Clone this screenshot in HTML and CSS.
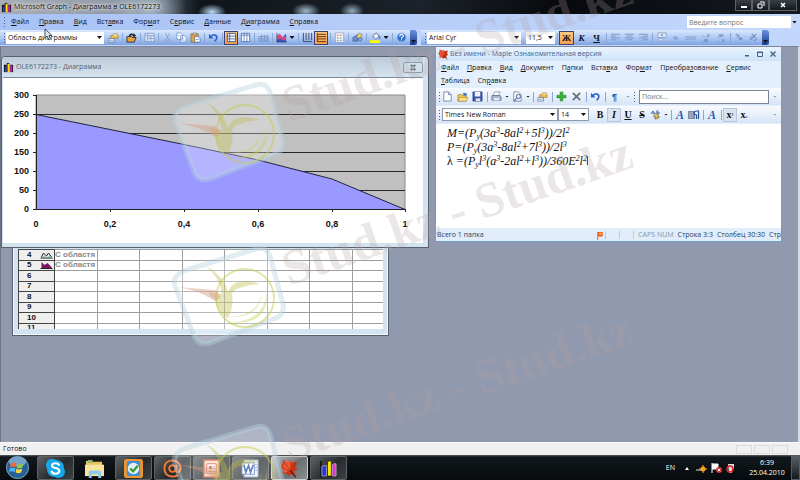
FILE: index.html
```html
<!DOCTYPE html>
<html lang="ru">
<head>
<meta charset="utf-8">
<title>Microsoft Graph - Диаграмма в OLE6172273</title>
<link rel="stylesheet" href="styles.css">
</head>
<body>
<svg class="defs" aria-hidden="true">
  <defs>
    <symbol id="graph" viewBox="0 0 12 12"><path d="M1 3h3v8H1z" fill="#111"/><path d="M2 5h2v6H2z" fill="#2a3df0"/><path d="M4 1h3v10H4z" fill="#222"/><path d="M5 2h2v9H5z" fill="#ffe600"/><path d="M8 3h3v8H8z" fill="#222"/><path d="M8 4h2v7H8z" fill="#e400c8"/></symbol>
    <symbol id="leaf" viewBox="0 0 24 24"><path d="M4 1l5 3 4-2 1 3 7-2-1 7 2 3-4 2 1 5-5-1-3 2-3-3-5 1 1-5-3-4 2-3z" fill="#cf3417"/><path d="M4 1l5 3 4-2 0 12-8 4-2-8 2-3z" fill="#ee5a33"/><path d="M4 2l10 14M20 4l-6 12M3 11l11 5" stroke="#9e210d" stroke-width=".8"/><path d="M13 15l7 8" stroke="#6d1408" stroke-width="1.600"/></symbol>
    <symbol id="props" viewBox="0 0 12 12"><path d="M3 4h8v3H3z" fill="#f3c44b" stroke="#8a6a1c" stroke-width=".6"/><path d="M1 7h6v4H1z" fill="#fff" stroke="#4a5f8f" stroke-width=".7"/><path d="M5 4l1-2h4l1 2" fill="#ffe9a0" stroke="#8a6a1c" stroke-width=".6"/><path d="M2 9h4" stroke="#4a5f8f" stroke-width=".7"/></symbol>
    <symbol id="import" viewBox="0 0 12 12"><path d="M1 5h5l1 1h4l-2 5H1z" fill="#e8a43c" stroke="#222" stroke-width=".9"/><path d="M3 4c1-3 4-3 5-1V1l3 3-3 2V5c-1-2-3-2-4 0z" fill="#222"/></symbol>
    <symbol id="sheet" viewBox="0 0 12 12"><path d="M1 1.500h10v9H1z" fill="#dbe7f8" stroke="#7e93ba" stroke-width=".8"/><path d="M1 4h10M4 1.500v9M4 7h7M7.500 4v6.500" stroke="#7e93ba" stroke-width=".8"/></symbol>
    <symbol id="cut" viewBox="0 0 12 12"><path d="M4 1l3 7M8 1L5 8" stroke="#8ba3cb" stroke-width="1"/><circle cx="4" cy="9.500" r="1.300" fill="none" stroke="#8ba3cb"/><circle cx="8" cy="9.500" r="1.300" fill="none" stroke="#8ba3cb"/></symbol>
    <symbol id="copy" viewBox="0 0 12 12"><path d="M1 1h4l2 2v5H1zM5 4h4l2 2v5H5z" fill="#fff" stroke="#6f8cc4" stroke-width=".8"/><path d="M6 7h3M6 9h4M2 4h2" stroke="#6f8cc4" stroke-width=".6"/></symbol>
    <symbol id="paste" viewBox="0 0 12 12"><path d="M1 2h8v9H1z" fill="#e2a23d" stroke="#876023" stroke-width=".7"/><path d="M3 1h4v2H3z" fill="#c9ccd4" stroke="#666" stroke-width=".5"/><path d="M5 5h4l2 2v4H5z" fill="#fff" stroke="#3d5e9e" stroke-width=".7"/><path d="M6 8h4" stroke="#3d5e9e" stroke-width=".6"/></symbol>
    <symbol id="undo" viewBox="0 0 12 12"><path d="M3 5c4-4 8-1 6 3-.5 1-1 1.500-2 2" fill="none" stroke="#2c63cf" stroke-width="1.700"/><path d="M1 2v5h5z" fill="#2c63cf"/></symbol>
    <symbol id="byrow" viewBox="0 0 12 12"><path d="M1.500 1.500h9v9h-9z" fill="#fff" stroke="#39588e"/><path d="M1 4.500h10M1 7.500h10M4 1v10" stroke="#39588e" stroke-width=".9"/></symbol>
    <symbol id="bycol" viewBox="0 0 12 12"><path d="M1.500 1.500h9v9h-9z" fill="#fff" stroke="#5979b0"/><path d="M4.500 1v10M7.500 1v10M1 3.500h10" stroke="#5979b0" stroke-width=".9"/></symbol>
    <symbol id="dtable" viewBox="0 0 12 12"><path d="M1 5h10v5H1zM1 7.500h10M4 3v7M7 3v7M10 3v7" fill="none" stroke="#7791c2" stroke-width=".9"/></symbol>
    <symbol id="area" viewBox="0 0 12 12"><path d="M1 11V5l3-3 3 4 4-4v9z" fill="#3a56c6"/><path d="M1 9V4l3-2 3 4 4-1v3L8 9 4 7z" fill="#e2477e"/><path d="M1 1v10h11" fill="none" stroke="#333" stroke-width=".7"/></symbol>
    <symbol id="vgrid" viewBox="0 0 12 12"><path d="M1.500 1v9.500H11M4.500 1v8M7.500 1v8M10.500 1v8" fill="none" stroke="#34415f"/></symbol>
    <symbol id="hgrid" viewBox="0 0 12 12"><path d="M1.500 1v9.500H11M2 2.500h9M2 5h9M2 7.500h9" fill="none" stroke="#5a310a"/></symbol>
    <symbol id="legend" viewBox="0 0 12 12"><path d="M1.500 1h9v10h-9z" fill="#fff" stroke="#8795b5" stroke-width=".7"/><path d="M3 3h2v1H3z" fill="#c33"/><path d="M3 6h2v1H3z" fill="#36b"/><path d="M3 8.500h2v1H3z" fill="#393"/><path d="M6 3.500h3M6 6.500h3M6 9h3" stroke="#555" stroke-width=".7"/></symbol>
    <symbol id="draw" viewBox="0 0 12 12"><path d="M1 6l5-3v7H1z" fill="#6b8ed6" stroke="#2f4a88" stroke-width=".6"/><path d="M5 5l3-4 3 2-3 5z" fill="#ead67a" stroke="#6d5c1d" stroke-width=".6"/><circle cx="9" cy="8" r="2" fill="#8ea6cf" stroke="#2f4a88" stroke-width=".6"/></symbol>
    <symbol id="fill" viewBox="0 0 12 12"><path d="M3 4l4-3 3 4-4 3z" fill="#eef3fb" stroke="#45597f" stroke-width=".8"/><path d="M9 4c2 0 2 2 1.500 4" fill="none" stroke="#2d61c2"/><path d="M0 9h11v3H0z" fill="#ff0"/></symbol>
    <symbol id="help" viewBox="0 0 12 12"><circle cx="6" cy="6" r="5" fill="#2f6fd0" stroke="#a5c4f0"/><path d="M4 5c0-3 4-3 4-1 0 1.500-2 1.500-2 3M6 8v1.300" fill="none" stroke="#fff" stroke-width="1.200"/></symbol>
    <symbol id="al" viewBox="0 0 12 12"><path d="M1 2.500h10M1 4.500h6M1 6.500h10M1 8.500h6" stroke="#7b96c8"/></symbol>
    <symbol id="ac" viewBox="0 0 12 12"><path d="M1 2.500h10M3 4.500h6M1 6.500h10M3 8.500h6" stroke="#7b96c8"/></symbol>
    <symbol id="ar" viewBox="0 0 12 12"><path d="M1 2.500h10M5 4.500h6M1 6.500h10M5 8.500h6" stroke="#7b96c8"/></symbol>
    <symbol id="money" viewBox="0 0 12 12"><path d="M2 1h9v5H2z" fill="#dde7f7" stroke="#8195bb" stroke-width=".8"/><ellipse cx="5" cy="8.500" rx="3" ry="1.500" fill="#cfdcf2" stroke="#8195bb" stroke-width=".7"/><circle cx="6.500" cy="3.500" r="1.200" fill="#8ba1ca"/></symbol>
    <symbol id="tiltd" viewBox="0 0 12 12"><path d="M2 2l7 7M3 6l3-3M6 9l3-3M5 7l2 2" stroke="#7b93c2" stroke-width="1.300"/></symbol>
    <symbol id="tiltu" viewBox="0 0 12 12"><path d="M2 9l7-7M4 2l4 4M2 5l3 3M6 10l4-3" stroke="#7b93c2" stroke-width="1.300"/></symbol>
    <symbol id="new" viewBox="0 0 12 12"><path d="M2 1h5l3 3v7H2z" fill="#fff" stroke="#566a94" stroke-width=".8"/><path d="M7 1v3h3" fill="none" stroke="#566a94" stroke-width=".8"/></symbol>
    <symbol id="open" viewBox="0 0 12 12"><path d="M1 4h4l1 1h4v6H1z" fill="#f5c94a" stroke="#9b7424" stroke-width=".7"/><path d="M3 7h9l-2 4H1z" fill="#ffe48c" stroke="#9b7424" stroke-width=".6"/><path d="M6 3c2-2 3-1 4 0V1l1 4H8" fill="#3c77c9"/></symbol>
    <symbol id="save" viewBox="0 0 12 12"><path d="M1 1h10v10H1z" fill="#3857a8" stroke="#243a7c" stroke-width=".7"/><path d="M3 1h6v5H3z" fill="#edf2fc"/><path d="M4 8h5v3H4z" fill="#dce4f2"/></symbol>
    <symbol id="print" viewBox="0 0 12 12"><path d="M4 1h6L8 5H2z" fill="#fff" stroke="#69799b" stroke-width=".7"/><path d="M1 5h9l1 2v3H1z" fill="#aebbd2" stroke="#53658c" stroke-width=".8"/><path d="M3 8h6v2H3z" fill="#f5f7fb"/></symbol>
    <symbol id="view" viewBox="0 0 12 12"><path d="M2 1h5l3 3v7H2z" fill="#fff" stroke="#566a94" stroke-width=".8"/><circle cx="7" cy="6" r="2.400" fill="#d5e5f8" stroke="#45638f"/><path d="M5 8l-3 3" stroke="#45638f" stroke-width="1.200"/></symbol>
    <symbol id="plus" viewBox="0 0 12 12"><path d="M4.500 1h3v3.500H11v3H7.500V11h-3V7.500H1v-3h3.500z" fill="#35b235" stroke="#1f8423" stroke-width=".5"/></symbol>
    <symbol id="del" viewBox="0 0 12 12"><path d="M2 2l8 8M10 2l-8 8" stroke="#6b7280" stroke-width="2"/></symbol>
    <symbol id="abc" viewBox="0 0 12 12"><path d="M3 4l5-1 2 6-5 2z" fill="#d9b85a"/><path d="M1 5l2-3 2 3M2 4h2M7 1v4h2V3H7M3 7c2 0 3 1 2 3M9 7l-2 3" fill="none" stroke="#4571bd" stroke-width="1"/></symbol>
    <symbol id="para" viewBox="0 0 12 12"><path d="M0 2h7v8H0z" fill="#7b889f"/><path d="M1 4h4M1 6h4M1 8h4" stroke="#d9e0ec" stroke-width=".7"/><path d="M11 2H8.500c-3 0-3 4 0 4v4M10.500 2v8" fill="none" stroke="#254f9f" stroke-width="1.200"/></symbol>
    <symbol id="mark" viewBox="0 0 120 108">
      <path d="M18 26L88 5q10-3 14 7l13 48q2 10-7 14L42 99q-12 3-16-7L7 42q-3-11 11-16z" fill="#fff" fill-opacity=".28" stroke="#b4d2de" stroke-opacity=".4" stroke-width="5"/>
      <circle cx="77" cy="54" r="29" fill="none" stroke="#c4cc48" stroke-opacity=".5" stroke-width="1.800"/>
      <path d="M61 78q36 0 38-31q2 36-38 31zM57 73q34 1 37-26q-1 29-37 26z" fill="#c4cc48" fill-opacity=".4"/>
      <path d="M38 22q18 10 22 26q6-17 32-8q-8 0-20 4q-6 1-8 6q2 14-4 24q-11-4-13-19q-6-3-6-7q6 1 13 2q-2-16-16-28z" fill="#bdbb48" fill-opacity=".38"/>
      <path d="M9 43l38 3q5 3 5 8l-5 3Q28 45 9 43z" fill="#d79a86" fill-opacity=".45"/>
    </symbol>
  </defs>
</svg>

<header class="titlebar">
  <svg class="i10"><use href="#graph"/></svg>
  <h1>Microsoft Graph - Диаграмма в OLE6172273</h1>
  <div class="winbtns">
    <button aria-label="Свернуть"><svg viewBox="0 0 10 8"><path d="M2 5h6v2H2z" fill="#fff"/></svg></button>
    <button aria-label="Восстановить"><svg viewBox="0 0 10 8"><path d="M4 1h4v4M2 3h4v4H2z" fill="none" stroke="#fff"/></svg></button>
    <button class="wide" aria-label="Закрыть"><svg viewBox="0 0 10 8"><path d="M3 2l4 4M7 2L3 6" stroke="#fff" stroke-width="1.500"/></svg></button>
  </div>
</header>

<nav class="menubar">
  <i class="grip"></i>
  <button><u>Ф</u>айл</button><button><u>П</u>равка</button><button><u>В</u>ид</button><button>Вст<u>а</u>вка</button><button>Фор<u>м</u>ат</button><button>С<u>е</u>рвис</button><button><u>Д</u>анные</button><button>Д<u>и</u>аграмма</button><button><u>С</u>правка</button>
  <div class="ask"><input type="text" placeholder="Введите вопрос" aria-label="Введите вопрос"><button aria-label="Список вопросов"><b class="tri"></b></button></div>
</nav>

<div class="toolbars">
  <div class="bar">
    <i class="grip"></i>
    <div class="combo area-combo"><select aria-label="Объект диаграммы"><option>Область диаграммы</option></select><b class="tri"></b></div>
    <i class="gap"></i>
    <button class="tb" aria-label="Свойства"><svg><use href="#props"/></svg></button><i class="sep"></i>
    <button class="tb" aria-label="Импорт"><svg><use href="#import"/></svg></button><i class="sep"></i>
    <button class="tb" aria-label="Режим таблицы"><svg><use href="#sheet"/></svg></button><i class="sep"></i>
    <button class="tb" aria-label="Вырезать"><svg><use href="#cut"/></svg></button>
    <button class="tb" aria-label="Копировать"><svg><use href="#copy"/></svg></button>
    <button class="tb" aria-label="Вставить"><svg><use href="#paste"/></svg></button><i class="sep"></i>
    <button class="tb" aria-label="Отменить"><svg><use href="#undo"/></svg></button><i class="sep"></i>
    <button class="tb on" aria-label="По строкам"><svg><use href="#byrow"/></svg></button>
    <button class="tb" aria-label="По столбцам"><svg><use href="#bycol"/></svg></button><i class="sep"></i>
    <button class="tb" aria-label="Таблица данных"><svg><use href="#dtable"/></svg></button><i class="sep"></i>
    <button class="tb" aria-label="Тип диаграммы"><svg><use href="#area"/></svg></button><button class="drop" aria-label="Другие типы"><b class="tri"></b></button><i class="sep"></i>
    <button class="tb" aria-label="Вертикальная сетка"><svg><use href="#vgrid"/></svg></button>
    <button class="tb on" aria-label="Горизонтальная сетка"><svg><use href="#hgrid"/></svg></button><i class="sep"></i>
    <button class="tb" aria-label="Легенда"><svg><use href="#legend"/></svg></button><i class="sep"></i>
    <button class="tb" aria-label="Рисование"><svg><use href="#draw"/></svg></button><i class="sep"></i>
    <button class="tb" aria-label="Цвет заливки"><svg><use href="#fill"/></svg></button><button class="drop" aria-label="Другие цвета"><b class="tri"></b></button><i class="sep"></i>
    <button class="tb" aria-label="Справка"><svg><use href="#help"/></svg></button>
    <button class="more" aria-label="Параметры панели"><b class="tri"></b></button>
  </div>
  <div class="bar">
    <i class="grip"></i>
    <div class="combo font-combo"><select aria-label="Шрифт"><option>Arial Cyr</option></select><b class="tri"></b></div>
    <i class="gap"></i><i class="gap"></i>
    <div class="combo size-combo"><select aria-label="Размер"><option>11,5</option></select><b class="tri"></b></div>
    <i class="sep"></i>
    <button class="tb on ltr">Ж</button><button class="tb ltr it">К</button><button class="tb ltr un">Ч</button><i class="sep"></i>
    <button class="tb" aria-label="По левому краю"><svg><use href="#al"/></svg></button><button class="tb" aria-label="По центру"><svg><use href="#ac"/></svg></button><button class="tb" aria-label="По правому краю"><svg><use href="#ar"/></svg></button><i class="sep"></i>
    <button class="tb" aria-label="Денежный формат"><svg><use href="#money"/></svg></button><button class="tb num">%</button><button class="tb num">000</button><button class="tb num two">←,0<br>,00</button><button class="tb num two">,00<br>→,0</button><i class="sep"></i>
    <button class="tb" aria-label="Текст снизу"><svg><use href="#tiltd"/></svg></button><button class="tb" aria-label="Текст сверху"><svg><use href="#tiltu"/></svg></button>
    <button class="more" aria-label="Параметры панели"><b class="tri"></b></button>
  </div>
</div>

<main class="workspace">
  <section class="window datasheet" aria-label="Таблица">
    <div class="sheet">
      <table>
        <colgroup><col class="rowhead"><col><col><col><col><col><col><col><col></colgroup>
        <tbody>
        <tr><th>4 <svg viewBox="0 0 12 8"><path d="M0 7h12M1 6l2-4 3 3 2-3 3 4" fill="none" stroke="#222"/><path d="M2 6l2-2 3 2 2-2 2 2z" fill="#8fd5d5"/></svg></th><td>С областя</td><td></td><td></td><td></td><td></td><td></td><td></td><td></td></tr>
        <tr><th>5 <svg viewBox="0 0 12 8"><path d="M1 7V1l3 3 3-2 4 4v1z" fill="#7b1263"/><path d="M0 7.500h12" stroke="#222"/></svg></th><td>С областя</td><td></td><td></td><td></td><td></td><td></td><td></td><td></td></tr>
        <tr><th>6</th><td></td><td></td><td></td><td></td><td></td><td></td><td></td><td></td></tr>
        <tr><th>7</th><td></td><td></td><td></td><td></td><td></td><td></td><td></td><td></td></tr>
        <tr><th>8</th><td></td><td></td><td></td><td></td><td></td><td></td><td></td><td></td></tr>
        <tr><th>9</th><td></td><td></td><td></td><td></td><td></td><td></td><td></td><td></td></tr>
        <tr><th>10</th><td></td><td></td><td></td><td></td><td></td><td></td><td></td><td></td></tr>
        <tr><th>11</th><td></td><td></td><td></td><td></td><td></td><td></td><td></td><td></td></tr>
        </tbody>
      </table>
    </div>
  </section>

  <section class="window chartwin">
    <header><svg class="i10"><use href="#graph"/></svg><h2>OLE6172273 - Диаграмма</h2><button aria-label="Закрыть"><svg viewBox="0 0 10 8"><path d="M2.500 1l5 6M7.500 1l-5 6" stroke="#59656f" stroke-width="2.400"/><path d="M3 2l4 4M7 2L3 6" stroke="#fff" stroke-width=".8"/></svg></button></header>
    <div class="chart">
      <svg viewBox="0 0 420 165" role="img" aria-label="Диаграмма с областями">
        <path d="M33 17h369v114H33z" fill="#c0c0c0" stroke="#8a8a8a"/>
        <path d="M33 36.500h369M33 55.500h369M33 74.500h369M33 93.500h369M33 112.500h369" stroke="#2a2630"/>
        <path d="M33 36.500L107 51.500 181 66.500 255 82 329 101 402 131.500H33z" fill="#9999ff"/>
        <path d="M33 36.500L107 51.500 181 66.500 255 82 329 101 402 131.500" fill="none" stroke="#22223c"/>
        <path d="M33.500 17v115M30 17.500h4M30 36.500h4M30 55.500h4M30 74.500h4M30 93.500h4M30 112.500h4M30 131.500h372.500M107.500 131v3M181.500 131v3M255.500 131v3M329.500 131v3M402.500 131v3" fill="none" stroke="#222"/>
        <g class="ylab"><text x="26" y="20">300</text><text x="26" y="39">250</text><text x="26" y="58">200</text><text x="26" y="77">150</text><text x="26" y="96">100</text><text x="26" y="115">50</text><text x="26" y="134">0</text></g>
        <g class="xlab"><text x="33" y="149">0</text><text x="107" y="149">0,2</text><text x="181" y="149">0,4</text><text x="255" y="149">0,6</text><text x="329" y="149">0,8</text><text x="402" y="149">1</text></g>
      </svg>
    </div>
  </section>

  <section class="maple">
    <header><svg class="i10"><use href="#leaf"/></svg><h2>Без имени - Maple Ознакомительная версия</h2>
      <button aria-label="Свернуть"><svg viewBox="0 0 10 8"><path d="M3 5h4v1.500H3z" fill="#44618e"/></svg></button><button aria-label="Развернуть"><svg viewBox="0 0 10 8"><path d="M2.500 2h5v4.500h-5zM2 2.500h6" fill="none" stroke="#44618e"/></svg></button><button aria-label="Закрыть"><svg viewBox="0 0 10 8"><path d="M2.500 1.500l5 5M7.500 1.500l-5 5" stroke="#44618e" stroke-width="1.400"/></svg></button>
    </header>
    <nav><button><u>Ф</u>айл</button><button><u>П</u>равка</button><button><u>В</u>ид</button><button><u>Д</u>окумент</button><button>П<u>а</u>пки</button><button>Вста<u>в</u>ка</button><button>Фор<u>м</u>ат</button><button>Преобра<u>з</u>ование</button><button><u>С</u>ервис</button><button><u>Т</u>аблица</button><button>Сп<u>р</u>авка</button></nav>
    <div class="mbar">
      <i class="grip"></i>
      <button class="mb" aria-label="Создать"><svg><use href="#new"/></svg></button><button class="mb" aria-label="Открыть"><svg><use href="#open"/></svg></button><button class="mb" aria-label="Сохранить"><svg><use href="#save"/></svg></button><i class="sep"></i>
      <button class="mb" aria-label="Печать"><svg><use href="#print"/></svg></button><button class="mdrop" aria-label="Параметры печати"><b class="tri"></b></button>
      <button class="mb" aria-label="Просмотр"><svg><use href="#view"/></svg></button><button class="mdrop" aria-label="Параметры просмотра"><b class="tri"></b></button><i class="sep"></i>
      <button class="mb" aria-label="Свойства"><svg><use href="#props"/></svg></button><i class="sep"></i>
      <button class="mb" aria-label="Добавить"><svg><use href="#plus"/></svg></button><button class="mb" aria-label="Удалить"><svg><use href="#del"/></svg></button><i class="sep"></i>
      <button class="mb" aria-label="Отменить"><svg><use href="#undo"/></svg></button><i class="sep"></i>
      <button class="mb pil">¶</button>
      <button class="mdrop dim" aria-label="Ещё"><b class="tri"></b></button><i class="grip"></i>
      <input type="search" placeholder="Поиск..." aria-label="Поиск">
      <button class="mdrop dim" aria-label="Ещё"><b class="tri"></b></button>
    </div>
    <div class="mbar">
      <i class="grip"></i>
      <div class="combo mfont"><select aria-label="Шрифт"><option>Times New Roman</option></select><b class="tri"></b></div><div class="combo msize"><select aria-label="Размер"><option>14</option></select><b class="tri"></b></div>
      <i class="gap"></i><i class="gap"></i>
      <button class="fb">B</button><button class="fb it lit">I</button><button class="fb un">U</button><button class="fb st">S</button>
      <button class="fb" aria-label="Орфография"><svg><use href="#abc"/></svg></button><button class="mdrop" aria-label="Язык"><b class="tri"></b></button><i class="sep"></i>
      <button class="fb blue it">A</button><button class="fb" aria-label="Стиль абзаца"><svg><use href="#para"/></svg></button><i class="sep"></i>
      <button class="fb blue it">A</button><i class="sep"></i>
      <button class="fb lit">x<sup>²</sup></button><button class="fb">x<sub>₂</sub></button>
      <button class="mdrop dim end" aria-label="Ещё"><b class="tri"></b></button>
    </div>
    <article>
      <p>M=(P<sub>y</sub>(3a<sup>3</sup>-8al<sup>2</sup>+5l<sup>3</sup>))/2l<sup>2</sup></p>
      <p>P=(P<sub>y</sub>(3a<sup>3</sup>-8al<sup>2</sup>+7l<sup>3</sup>))/2l<sup>3</sup></p>
      <p><span class="up">λ</span> =(P<sub>y</sub>l<sup>3</sup>(a<sup>3</sup>-2al<sup>2</sup>+l<sup>3</sup>))/360E<sup>2</sup>l<sup>2</sup><i class="caret"></i></p>
    </article>
    <footer><span class="total">Всего 1 папка</span><span class="flag"><svg viewBox="0 0 8 10"><path d="M1 1h6v5H2v4H1z" fill="#ee5c17"/><path d="M3 2h3v2H3z" fill="#ffb06b"/></svg></span><span class="cell"></span><span class="cell"></span><span class="caps">CAPS NUM</span><span>Строка 3:3</span><span>Столбец 30:30</span><span>Стр</span></footer>
  </section>
</main>

<footer class="status"><span>Готово</span><i></i><i></i><i></i></footer>

<footer class="taskbar">
  <button class="orb" aria-label="Пуск"><svg viewBox="0 0 26 24"><circle cx="13" cy="12" r="11.500" fill="#236299" stroke="#83aac6"/><ellipse cx="13" cy="6" rx="9" ry="5" fill="#a8cde5" opacity=".6"/><path d="M6 8q3-2 6 0l-1 4q-3-2-6 0z" fill="#f06b30"/><path d="M13 8q3 2 6 0l-1 4q-3 2-6 0z" fill="#93cb45"/><path d="M5 13q3-2 6 0l-1 4q-3-2-6 0z" fill="#4cb3f2"/><path d="M12 13q3 2 6 0l-1 4q-3 2-6 0z" fill="#ffd33e"/></svg></button>
  <button class="task" aria-label="Skype"><svg viewBox="0 0 20 20"><path d="M6 0q3 0 5 1 8 1 8 9 1 2 1 4-1 6-7 6-2 0-3-1Q1 19 1 10 0 8 0 6q1-6 6-6z" fill="#18a8ea"/><path d="M14 7q-1-3-5-2.500Q6 5 6.500 7.500 7 9 10 9.500q4 .7 4 3-.3 3-4 3t-4.500-3" fill="none" stroke="#fff" stroke-width="2.200"/></svg></button>
  <button class="task plain" aria-label="Проводник"><svg viewBox="0 0 20 20"><path d="M1 2h6l1 1h10v14H1z" fill="#e5c566"/><path d="M3 1h5v3H3z" fill="#8fb96a"/><path d="M0 6h20v12H0z" fill="#f7e59d"/><path d="M4 20v-6q0-2 2-2h9q2 0 2 2v6h-3v-4H7v4z" fill="#8ecaee"/></svg></button>
  <button class="task" aria-label="Почта"><svg viewBox="0 0 20 20"><rect width="20" height="20" rx="3" fill="#ee9431"/><rect x="3" y="2" width="14" height="16" rx="2" fill="#3f8fd4"/><circle cx="10" cy="10" r="6" fill="#e4eef6"/><path d="M6.500 10l3 3 5-6" fill="none" stroke="#3a9d2c" stroke-width="2.400"/></svg></button>
  <button class="task" aria-label="Агент"><svg viewBox="0 0 20 20"><circle cx="10" cy="10" r="3.500" fill="none" stroke="#f47a32" stroke-width="2"/><path d="M14 6v6q0 2 2 2 3-1 2.500-5Q17 1.500 10 1.500 1.500 2 1.500 10T10 18.500q3 0 6-1.500" fill="none" stroke="#f47a32" stroke-width="2"/></svg></button>
  <button class="task" aria-label="PowerPoint"><svg viewBox="0 0 20 20"><path d="M2 1h16v18H2z" fill="#f6dccb" stroke="#cc5933" stroke-width="1.500"/><path d="M5 5h10v10H5z" fill="#fff" stroke="#cf5a36"/><circle cx="9" cy="9" r="2" fill="#cf5a36"/><path d="M12 8h2M12 10h2M6 13h8" stroke="#cf5a36"/></svg></button>
  <button class="task" aria-label="Word"><svg viewBox="0 0 20 20"><path d="M3 1h15v18H3z" fill="#e9f0fa" stroke="#7893c4"/><path d="M1 4h13v12H1z" fill="#fff" stroke="#4c70b5"/><path d="M3 6l2 8 3-7 2 7 3-8" fill="none" stroke="#2d57a7" stroke-width="1.800"/><path d="M15 6h2M15 9h2M15 12h2" stroke="#7893c4"/></svg></button>
  <button class="task lit" aria-label="Maple"><svg><use href="#leaf"/></svg></button>
  <button class="task" aria-label="Microsoft Graph"><svg viewBox="0 0 20 20"><path d="M2 2v16h17" fill="none" stroke="#111" stroke-width="1.500"/><path d="M3 8l2-1h3v11H3z" fill="#2939c9" stroke="#dde" stroke-width=".6"/><path d="M9 3l2-1h2v16H9z" fill="#ffe900" stroke="#222" stroke-width=".8"/><path d="M14 6l2-1h2v13h-4z" fill="#db38cb" stroke="#dde" stroke-width=".6"/></svg></button>
  <div class="tray"><span class="lang">EN</span><svg viewBox="0 0 52 12"><path d="M0 8l2-3 2 3z" fill="#fff"/><path d="M11 8h9" stroke="#999" stroke-width="1.500"/><circle cx="18" cy="7" r="2.500" fill="#f8a71c"/><path d="M18 3v8M14 7h8" stroke="#f8a71c"/><path d="M27 2h6v5h-6M27 1v10" fill="#fff" stroke="#fff"/><circle cx="34" cy="8" r="3" fill="#dc2828"/><path d="M32.700 6.700l2.600 2.600M35.300 6.700l-2.600 2.600" stroke="#fff"/><path d="M43 2h6v5h-2v4h-3z" fill="#ddd"/><circle cx="45" cy="7" r="3" fill="none" stroke="#d22" stroke-width="1.500"/></svg><time>6:39<br>25.04.2010</time></div>
  <button class="peek" aria-label="Свернуть все окна"></button>
</footer>

<svg class="pointer" viewBox="0 0 9 13" aria-hidden="true"><path d="M1 1v9l2-2 2 4 1.500-1L5 7.500h3z" fill="#dce8fb" stroke="#333c50" stroke-width=".9"/></svg>
<svg class="watermark" viewBox="0 0 800 480" preserveAspectRatio="xMinYMin slice" aria-hidden="true">
  <use href="#mark" x="168" y="80" width="120" height="108"/>
  <use href="#mark" x="168" y="244" width="120" height="108"/>
  <use href="#mark" x="168" y="422" width="120" height="108"/>
  <text transform="translate(289 122) rotate(-19)">Stud.kz - Stud.kz</text>
  <text transform="translate(289 286) rotate(-19)">Stud.kz - Stud.kz</text>
  <text transform="translate(289 462) rotate(-19)">Stud.kz - Stud.kz</text>
</svg>
</body>
</html>
```
FILE: styles.css
```css
* { box-sizing: border-box; }
html, body { height: 100%; margin: 0; }
body {
  display: flex; flex-direction: column; position: relative; overflow: hidden;
  font: 7px/10px "Open Sans", "Noto Sans", sans-serif; color: #111; background: #9199ae;
}
h1, h2, p { margin: 0; font-size: inherit; font-weight: normal; }
button, input, select { font: inherit; color: inherit; border: 0; padding: 0; margin: 0; background: none; border-radius: 0; }
button { display: flex; align-items: center; justify-content: center; white-space: nowrap; }
u { text-underline-offset: 1px; }
svg { display: block; flex: none; }
.defs { position: absolute; width: 0; height: 0; }
.i10 { width: 11px; height: 11px; }

.titlebar {
  display: flex; align-items: center; gap: 2px; height: 14px; flex: none; padding-left: 1px;
  background:
    radial-gradient(ellipse 14px 8px at 212px 12px, #b9dcf5, transparent),
    radial-gradient(ellipse 14px 8px at 306px 11px, #9fb9cd, transparent),
    radial-gradient(ellipse 12px 8px at 352px 11px, #8faabe, transparent),
    radial-gradient(ellipse 36px 30px at 150px 8px, #a9b8c6, transparent),
    linear-gradient(90deg, #a8aeb8, #8d97a4 130px, #39424d 172px, #10151b 200px, #1c2229 420px, #07090c 560px, #141a20);
}
.titlebar h1 { text-shadow: 0 0 3px #fff, 0 0 4px #fff; }
.winbtns { display: flex; margin: 0 3px 3px auto; align-self: flex-start; }
.winbtns button { width: 17px; height: 11px; border: 1px solid #5b6268; border-top: 0; background: linear-gradient(#3a4046, #14181c); }
.winbtns .wide { width: 28px; }
.winbtns svg { width: 10px; height: 8px; }

.menubar { display: flex; align-items: center; gap: 10px; height: 16px; flex: none; padding: 0 2px 0 4px; background: linear-gradient(90deg, #a9c2f6, #c3d8fb); }
.grip { width: 1px; height: 10px; flex: none; background: repeating-linear-gradient(#4a66a0 0 1px, transparent 1px 3px); }
.menubar .grip { margin-right: -4px; }
.ask { display: flex; align-items: center; margin-left: auto; height: 12px; }
.ask input { width: 104px; height: 12px; padding: 0 2px; background: #fff; }
.ask button { width: 7px; height: 12px; }
::placeholder { color: #777; opacity: 1; }
.tri { display: block; width: 5px; height: 3px; background: #111; clip-path: polygon(0 0, 100% 0, 50% 100%); pointer-events: none; }

.toolbars { display: flex; gap: 4px; height: 16px; flex: none; background: #c0d6fa; }
.bar { display: flex; align-items: center; height: 15px; padding-left: 4px; background: linear-gradient(#dbe8fd, #a7c3f2 60%, #7fa3e0); }
.combo { display: flex; align-items: center; height: 12px; background: #fff; }
.combo select { flex: 1; min-width: 0; height: 12px; appearance: none; padding-left: 2px; }
.combo .tri { margin-left: -7px; margin-right: 2px; }
.bar .combo { margin-left: 1px; }
.area-combo { width: 98px; }
.font-combo { width: 94px; }
.size-combo { width: 29px; }
.gap { width: 2px; }
.sep { width: 1px; height: 10px; flex: none; margin: 0 1px 0 2px; background: #8aa7d8; }
.tb { width: 14px; height: 14px; flex: none; }
.tb svg { width: 11px; height: 11px; }
.on { background: linear-gradient(#fbc884, #f59d4d); border: 1px solid #3c3f78; }
.drop { width: 8px; height: 14px; }
.more { width: 7px; height: 15px; margin-left: 2px; align-items: flex-end; padding-bottom: 2px; background: linear-gradient(#6a92dd, #1b3b93); border-radius: 0 3px 3px 0; }
.ltr { font: bold 9px/12px "Liberation Serif", serif; width: 15px; }
.un { text-decoration: underline; }
.num { font-size: 6px; width: 15px; color: #6580b4; }
.two { font-size: 4px; line-height: 5px; font-weight: bold; }

.workspace { position: relative; flex: 1; min-height: 0; border-left: 1px solid #6e7386; border-right: 2px solid #d5dbe4; border-top: 1px solid #7d859b; overflow: hidden; }
.window { position: absolute; background: #d3e3f0; border: 1px solid #59606d; }

.datasheet { left: 11px; top: 170px; width: 377px; height: 119px; padding: 31px 5px 5px; box-shadow: inset 0 0 0 1px #f3f8fc; }
.sheet { height: 80px; overflow: hidden; background: #fff; }
table { width: 377px; height: 85px; table-layout: fixed; border-collapse: collapse; color: #888; font: bold 8px/8px "Liberation Sans", sans-serif; }
.rowhead { width: 36px; }
th, td { padding: 0; border: 1px solid #9d9d9d; white-space: nowrap; }
td { text-align: left; }
th { color: #111; background: #efefef; border-color: #444; padding-left: 8px; text-align: left; }
th svg { float: right; width: 13px; height: 8px; margin-right: 1px; }

.chartwin { left: 0; top: 9px; width: 428px; height: 192px; padding: 0 5px 5px 1px; border-radius: 4px 4px 0 0; }
.chartwin header { display: flex; align-items: center; gap: 2px; height: 20px; background: linear-gradient(#bccbd9, #d5e3ef); color: #56626e; }
.chartwin header button { margin-left: auto; width: 20px; height: 11px; border: 1px solid #8c9cab; border-radius: 2px; background: #d4e0ec; }
.chartwin header button svg { width: 10px; height: 7px; }
.chart { background: #fff; border-top: 1px solid #7e8894; }
.chart svg { width: 100%; height: auto; }
.chart text { font: bold 9px "Liberation Sans", sans-serif; fill: #111; }
.ylab { text-anchor: end; }
.xlab { text-anchor: middle; }

.maple { position: absolute; left: 434px; top: 0; width: 347px; height: 195px; display: flex; flex-direction: column; background: #e3effc; border: 1px solid #6a9fd0; border-top: 0; overflow: hidden; }
.maple header { display: flex; align-items: center; height: 14px; flex: none; padding: 0 2px; background: linear-gradient(#e9f4fe, #cfe3f8); color: #3e6796; }
.maple header h2 { flex: 1; margin-left: 1px; }
.maple header button { width: 13px; }
.maple header button svg { width: 10px; height: 8px; }
.maple nav { display: flex; flex-wrap: wrap; gap: 3px 8px; padding: 2px 20px 2px 5px; }
.mbar { display: flex; align-items: center; height: 17px; flex: none; margin-bottom: 1px; padding-left: 3px; background: linear-gradient(#f8fbff, #d6e4f6); }
.mb { width: 15px; height: 15px; flex: none; }
.mb svg { width: 11px; height: 11px; }
.mdrop { width: 6px; height: 14px; flex: none; }
.mdrop .tri { width: 4px; height: 2px; }
.dim { opacity: .4; width: 12px; }
.end { margin-left: auto; }
.pil { font: bold 9px/12px "Liberation Sans", sans-serif; color: #254f9f; }
.mbar input { flex: 1; min-width: 0; height: 14px; margin-left: 4px; padding: 0 2px; background: #fff; border: 1px solid #7c8592; }
.mbar .combo { height: 13px; border: 1px solid #9099a8; }
.mbar .combo select { height: 11px; }
.mfont { width: 116px; margin-left: 2px; }
.msize { width: 31px; }
.fb { width: 14px; height: 14px; flex: none; font: bold 10px/12px "Liberation Serif", serif; }
.fb svg { width: 12px; height: 12px; }
.fb sup, .fb sub { font-size: 6px; line-height: 6px; }
.lit { background: #dbe3f1; border: 1px solid #b9c5da; }
.st { text-decoration: line-through; }
.blue { color: #2b5cae; font-size: 12px; }
.it { font-style: italic; }
.maple article { flex: 1; padding: 2px 11px; background: #fff; font: italic 12px/14px "Liberation Serif", serif; white-space: nowrap; }
article sup, article sub { font-size: 8px; line-height: 0; }
article sup { vertical-align: 4px; }
article sub { vertical-align: -2px; }
.up { font-style: normal; }
.caret { display: inline-block; width: 1px; height: 9px; background: #333; }
.maple footer { display: flex; align-items: center; gap: 4px; height: 13px; flex: none; padding-left: 1px; background: #e1edfa; color: #263f63; white-space: nowrap; overflow: hidden; }
.total { width: 164px; }
.flag, .cell { width: 10px; height: 8px; flex: none; border-right: 1px solid #bccbdd; }
.flag svg { width: 8px; height: 9px; }
.caps { color: #8b95a3; }
.total { flex: 1; }

.status { display: flex; align-items: center; height: 13px; flex: none; padding: 0 12px 0 3px; background: #f0f0f0; border-top: 1px solid #fafafa; font-size: 7px; }
.status span { flex: 1; }
.status i { width: 16px; height: 9px; margin-left: 2px; border: 1px solid #dcdcdc; }

.taskbar { display: flex; align-items: stretch; gap: 2px; height: 25px; flex: none; padding-left: 4px; background: linear-gradient(#566064, #11171b 2px, #070b0e); color: #fff; }
.orb { width: 26px; margin-right: 5px; }
.orb svg { width: 25px; height: 23px; }
.task { width: 37px; margin-top: 1px; border: 1px solid #5d6367; border-radius: 2px; background: linear-gradient(135deg, #5d6265, #272b2e 55%, #3c4144); }
.task svg { width: 19px; height: 19px; }
.task.plain { border-color: transparent; background: none; }
.task.lit { border-color: #c9cccd; background: linear-gradient(135deg, #b8babb, #6b7072 55%, #8b8f91); }
.tray { display: flex; align-items: center; margin-left: auto; gap: 10px; }
.tray svg { width: 52px; height: 12px; }
.tray time { width: 40px; text-align: center; margin-right: 2px; }
.peek { width: 9px; border: 1px solid #555d62; background: linear-gradient(#5b6367, #14181b); }

.pointer { position: absolute; left: 44px; top: 28px; width: 9px; height: 13px; pointer-events: none; }
.watermark { position: absolute; left: 0; top: 0; width: 100%; height: 100%; pointer-events: none; }
.watermark text { font: bold 50px "Liberation Serif", serif; fill: #b4a0a0; fill-opacity: .25; }
```
